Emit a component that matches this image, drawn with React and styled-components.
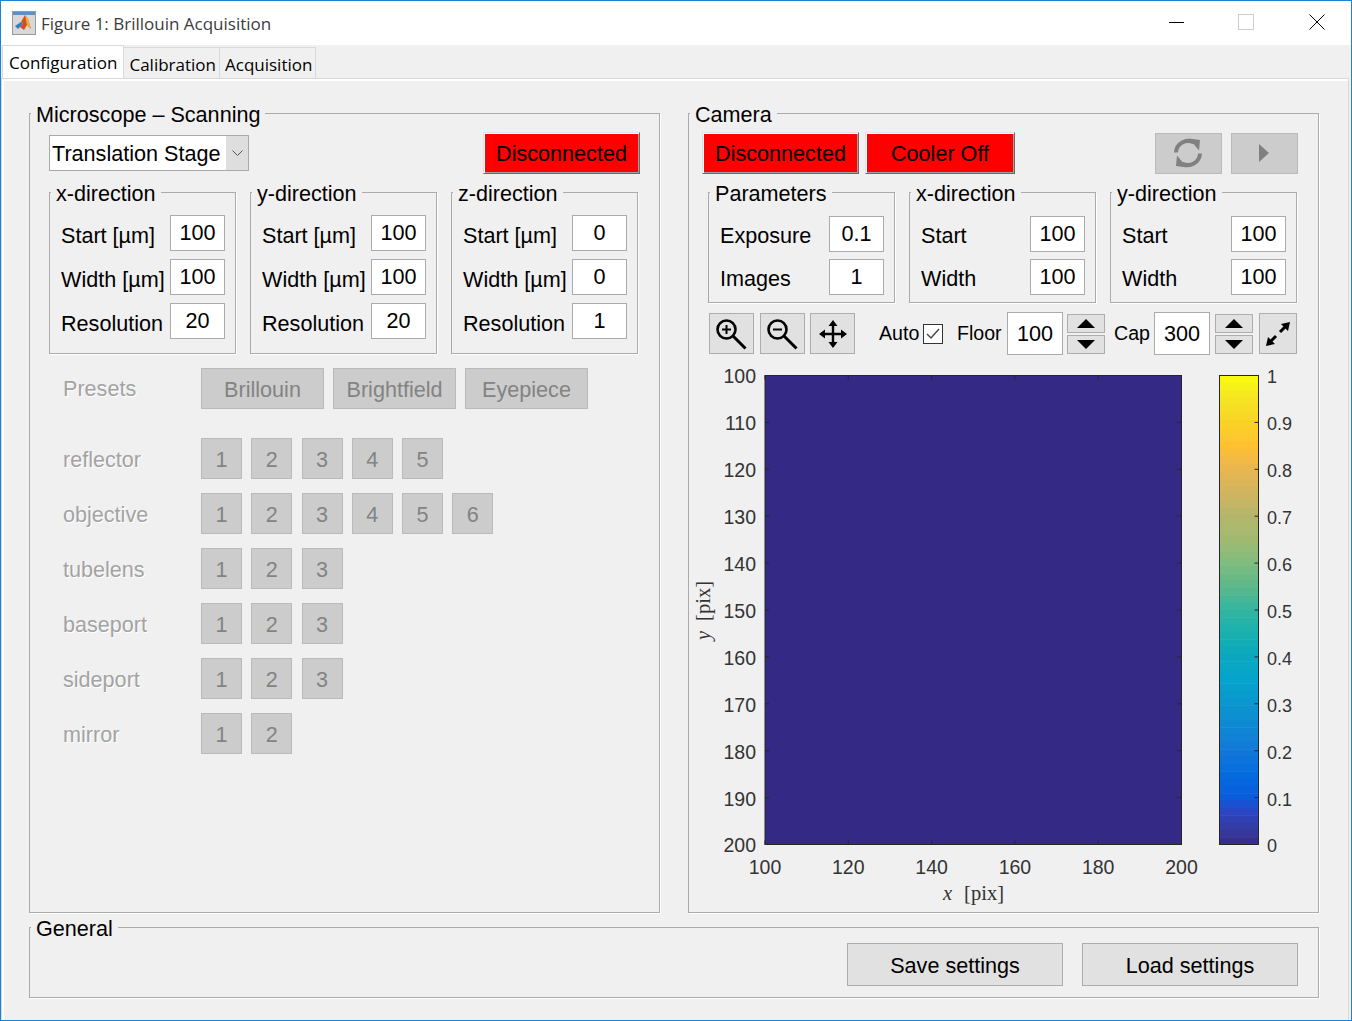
import styled, { createGlobalStyle } from 'styled-components'

const GlobalStyle = createGlobalStyle`
  html, body {
    margin: 0;
    padding: 0;
    background: #f0f0f0;
  }
  * {
    box-sizing: border-box;
  }
`

const SANS = `"Liberation Sans", Arial, sans-serif`
const UI = `"Open Sans", "Noto Sans", sans-serif`

const PARULA = [
  [0, '#352a87'], [0.03, '#363a9f'], [0.07, '#2b46c4'], [0.1, '#0a5cdc'], [0.15, '#046bdf'],
  [0.2, '#1178d8'], [0.25, '#0f88d2'], [0.3, '#0a96cf'], [0.35, '#06a4cc'], [0.4, '#0aa8c0'],
  [0.45, '#19b0ae'], [0.5, '#33b5a0'], [0.55, '#5cb98a'], [0.6, '#7fbc7d'], [0.65, '#a0ba6f'],
  [0.7, '#b4b66a'], [0.75, '#d0b55f'], [0.8, '#e9b650'], [0.85, '#ffc030'], [0.9, '#fad326'],
  [0.95, '#f5e524'], [1, '#f9fb0e'],
]

const hex = (c) => [1, 3, 5].map((i) => parseInt(c.slice(i, i + 2), 16))

const parula = (t) => {
  let i = 0
  while (i < PARULA.length - 2 && PARULA[i + 1][0] < t) i++
  const [t0, c0] = PARULA[i]
  const [t1, c1] = PARULA[i + 1]
  const f = Math.min(1, Math.max(0, (t - t0) / (t1 - t0)))
  const a = hex(c0)
  const b = hex(c1)
  return `rgb(${a.map((v, k) => Math.round(v + (b[k] - v) * f)).join(',')})`
}

const ScanGroup = ({ title, rows }) => (
  <SubPanel $padBottom={14} $pitch={8} $top={22}>
    <SubTitle>{title}</SubTitle>
    {rows.map(([label, value]) => (
      <FieldRow key={label}>
        <FieldLabel $shift={5}>{label}</FieldLabel>
        <ValueBox>{value}</ValueBox>
      </FieldRow>
    ))}
  </SubPanel>
)

const CameraGroup = ({ title, rows }) => (
  <SubPanel $padBottom={7} $pitch={7} $top={23}>
    <SubTitle>{title}</SubTitle>
    {rows.map(([label, value]) => (
      <FieldRow key={label}>
        <FieldLabel $shift={4}>{label}</FieldLabel>
        <ValueBox>{value}</ValueBox>
      </FieldRow>
    ))}
  </SubPanel>
)

const PresetLine = ({ label, count }) => (
  <PresetRow>
    <DisabledLabel $shift={3}>{label}</DisabledLabel>
    <ButtonRun $gap={9.28}>
      {Array.from({ length: count }, (_, i) => (
        <NumberButton key={i}>{i + 1}</NumberButton>
      ))}
    </ButtonRun>
  </PresetRow>
)

const MatlabLogo = () => (
  <svg width="24" height="24" viewBox="0 0 24 24">
    <rect x="0.5" y="0.5" width="23" height="23" fill="#d8d8d8" stroke="#9a9a9a" />
    <rect x="1" y="1" width="22" height="3" fill="#5f8fc4" />
    <path d="M3 15 L9 11 L11 12 L8 16 L6 18 Z" fill="#2f7fc0" />
    <path d="M9 11 L13 4 L16 8 L19 18 L15 14 L12 19 L8 16 L11 12 Z" fill="#d2501f" />
    <path d="M13 4 L16 8 L19 18 L15 14 Z" fill="#f2b035" />
  </svg>
)

const ZoomIcon = ({ plus }) => (
  <svg width="34" height="34" viewBox="0 0 34 34" fill="none" stroke="#000">
    <circle cx="11.5" cy="12.5" r="9" strokeWidth="2.6" />
    <path d="M18 19 L30.5 31.5" strokeWidth="3" />
    <path d="M7 12.5 H16" strokeWidth="2" />
    {plus && <path d="M11.5 8 V17" strokeWidth="2" />}
  </svg>
)

const PanIcon = () => (
  <svg width="30" height="30" viewBox="0 0 30 30" fill="#000" stroke="#000">
    <path d="M15 4 V26 M4 15 H26" strokeWidth="2.4" />
    <path d="M15 1 L19.5 7 H10.5 Z M15 29 L19.5 23 H10.5 Z M1 15 L7 10.5 V19.5 Z M29 15 L23 10.5 V19.5 Z" stroke="none" />
  </svg>
)

const ExpandIcon = () => (
  <svg width="26" height="26" viewBox="0 0 26 26" fill="#000" stroke="#000">
    <path d="M15 11 L20 6 M11 15 L6 20" strokeWidth="3" />
    <path d="M25 1 L23 10 L16 3 Z M1 25 L3 16 L10 23 Z" stroke="none" />
  </svg>
)

const RefreshIcon = () => (
  <svg width="30" height="30" viewBox="0 0 30 30" fill="#808080">
    <path d="M3 14.5 A12 12 0 0 1 21 4.6" fill="none" stroke="#808080" strokeWidth="4" />
    <path d="M27 15.5 A12 12 0 0 1 9 25.4" fill="none" stroke="#808080" strokeWidth="4" />
    <path d="M16 0.5 L27 2 L26 12.5 Z M14 29.5 L3 28 L4 17.5 Z" />
  </svg>
)

const Triangle = ({ dir, size = 18, h = 9, fill = '#000' }) => (
  <svg width={size} height={h} viewBox={`0 0 ${size} ${h}`} fill={fill}>
    <path d={dir === 'up' ? `M${size / 2} 0 L${size} ${h} H0 Z` : `M0 0 H${size} L${size / 2} ${h} Z`} />
  </svg>
)

const PlayIcon = () => (
  <svg width="10" height="18" viewBox="0 0 10 18" fill="#808080">
    <path d="M0 0 L10 9 L0 18 Z" />
  </svg>
)

const CheckMark = () => (
  <svg width="14" height="12" viewBox="0 0 14 12" fill="none" stroke="#444" strokeWidth="1.4">
    <path d="M1 6 L5 10 L13 1" />
  </svg>
)

const Spinner = ({ left }) => (
  <SpinnerStack $left={left}>
    <SpinnerButton><Triangle dir="up" /></SpinnerButton>
    <SpinnerButton><Triangle dir="down" /></SpinnerButton>
  </SpinnerStack>
)

const range = (n) => Array.from({ length: n }, (_, i) => i)

const Chart = () => {
  const left = 765
  const right = 1181.5
  const top = 375.5
  const bottom = 844.5
  const w = right - left
  const h = bottom - top
  return (
    <ChartSvg viewBox="689 360 629 546" width="629" height="546">
      <rect x={left} y={top} width={w} height={h} fill="#342a85" />
      {range(6).map((i) => {
        const x = left + (w * i) / 5
        return (
          <g key={i}>
            <path d={`M${x} ${bottom} v-4 M${x} ${top} v4`} stroke="#262626" />
            <TickText x={x} y={874} textAnchor="middle">{100 + i * 20}</TickText>
          </g>
        )
      })}
      {range(11).map((i) => {
        const y = top + (h * i) / 10
        return (
          <g key={i}>
            <path d={`M${left} ${y} h4 M${right} ${y} h-4`} stroke="#262626" />
            <TickText x={756} y={y + 7.9} textAnchor="end">{100 + i * 10}</TickText>
          </g>
        )
      })}
      <rect x={left} y={top} width={w} height={h} fill="none" stroke="#262626" />

      {range(64).map((i) => (
        <rect
          key={i}
          x={1219.5}
          y={top + (h * i) / 64}
          width={39}
          height={h / 64 + 0.5}
          fill={parula(1 - (i + 0.5) / 64)}
        />
      ))}
      <rect x={1219.5} y={top} width={39} height={h} fill="none" stroke="#262626" />
      {range(11).map((i) => {
        const y = top + (h * i) / 10
        return (
          <g key={i}>
            {i > 0 && i < 10 && <path d={`M1258.5 ${y} h-4`} stroke="#262626" />}
            <BarText x={1267} y={y + 7.9}>{i === 0 ? '1' : i === 10 ? '0' : (1 - i / 10).toFixed(1)}</BarText>
          </g>
        )
      })}

      <AxisText x={943} y={900}>
        <tspan fontStyle="italic">x</tspan>
        <tspan dx="12">[pix]</tspan>
      </AxisText>
      <AxisText transform="translate(710 640) rotate(-90)">
        <tspan fontStyle="italic">y</tspan>
        <tspan dx="10">[pix]</tspan>
      </AxisText>
    </ChartSvg>
  )
}

const App = () => (
  <>
    <GlobalStyle />
    <Window>
      <TitleBar>
        <LogoSlot><MatlabLogo /></LogoSlot>
        <WindowTitle>Figure 1: Brillouin Acquisition</WindowTitle>
        <WindowControls>
          <Minimize />
          <Maximize />
          <CloseGlyph width="16" height="16" viewBox="0 0 16 16" stroke="#000">
            <path d="M0.5 0.5 L15.5 15.5 M15.5 0.5 L0.5 15.5" />
          </CloseGlyph>
        </WindowControls>
      </TitleBar>
      <TabStrip>
        <Tab $active>Configuration</Tab>
        <Tab>Calibration</Tab>
        <Tab>Acquisition</Tab>
      </TabStrip>
      <TabPanel>
        <Columns>
          <Panel $height={800}>
            <PanelTitle>Microscope – Scanning</PanelTitle>
            <HeaderRow $left={19} $right={19}>
              <Select>
                <SelectValue>Translation Stage</SelectValue>
                <SelectArrow>
                  <svg width="11" height="7" viewBox="0 0 11 7" fill="none" stroke="#555">
                    <path d="M0.5 0.5 L5.5 5.5 L10.5 0.5" />
                  </svg>
                </SelectArrow>
              </Select>
              <StatusButton $width={157}>Disconnected</StatusButton>
            </HeaderRow>
            <GroupRow>
              <ScanGroup title="x-direction" rows={[['Start [µm]', 100], ['Width [µm]', 100], ['Resolution', 20]]} />
              <ScanGroup title="y-direction" rows={[['Start [µm]', 100], ['Width [µm]', 100], ['Resolution', 20]]} />
              <ScanGroup title="z-direction" rows={[['Start [µm]', 0], ['Width [µm]', 0], ['Resolution', 1]]} />
            </GroupRow>
            <Presets>
              <PresetHead>
                <DisabledLabel $shift={1}>Presets</DisabledLabel>
                <ButtonRun $gap={9}>
                  <PresetButton>Brillouin</PresetButton>
                  <PresetButton>Brightfield</PresetButton>
                  <PresetButton>Eyepiece</PresetButton>
                </ButtonRun>
              </PresetHead>
              <PresetLine label="reflector" count={5} />
              <PresetLine label="objective" count={6} />
              <PresetLine label="tubelens" count={3} />
              <PresetLine label="baseport" count={3} />
              <PresetLine label="sideport" count={3} />
              <PresetLine label="mirror" count={2} />
            </Presets>
          </Panel>

          <Panel $height={800}>
            <PanelTitle>Camera</PanelTitle>
            <HeaderRow $left={13} $right={20}>
              <ButtonPair $gap={6}>
                <StatusButton $width={157}>Disconnected</StatusButton>
                <StatusButton $width={150}>Cooler Off</StatusButton>
              </ButtonPair>
              <ButtonPair $gap={9}>
                <IconDisabled><RefreshIcon /></IconDisabled>
                <IconDisabled><PlayIcon /></IconDisabled>
              </ButtonPair>
            </HeaderRow>
            <GroupRow>
              <CameraGroup title="Parameters" rows={[['Exposure', 0.1], ['Images', 1]]} />
              <CameraGroup title="x-direction" rows={[['Start', 100], ['Width', 100]]} />
              <CameraGroup title="y-direction" rows={[['Start', 100], ['Width', 100]]} />
            </GroupRow>
            <Toolbar>
              <ToolButton><ZoomIcon plus /></ToolButton>
              <ToolButton $left={6}><ZoomIcon /></ToolButton>
              <ToolButton $left={5}><PanIcon /></ToolButton>
              <ToolLabel $left={24} $width={44}>Auto</ToolLabel>
              <CheckBox><CheckMark /></CheckBox>
              <ToolLabel $left={14} $width={50}>Floor</ToolLabel>
              <ToolInput>100</ToolInput>
              <Spinner left={4} />
              <ToolLabel $left={9} $width={40}>Cap</ToolLabel>
              <ToolInput>300</ToolInput>
              <Spinner left={5} />
              <WideTool><ExpandIcon /></WideTool>
            </Toolbar>
            <Chart />
          </Panel>
        </Columns>

        <Panel $height={71}>
          <PanelTitle>General</PanelTitle>
          <GeneralActions>
            <ActionButton>Save settings</ActionButton>
            <ActionButton>Load settings</ActionButton>
          </GeneralActions>
        </Panel>
      </TabPanel>
    </Window>
  </>
)

export default App

const Window = styled.div`
  width: 1352px;
  height: 1021px;
  border: 1px solid #1883d7;
  background: #f0f0f0;
  display: flex;
  flex-direction: column;
  overflow: hidden;
  font-family: ${SANS};
  color: #000;
`

const TitleBar = styled.div`
  height: 44px;
  background: #fff;
  display: flex;
  align-items: center;
  flex-shrink: 0;
`

const LogoSlot = styled.div`
  width: 40px;
  padding-left: 11px;
  display: flex;
`

const WindowTitle = styled.div`
  font-family: ${UI};
  font-size: 17px;
  color: #3c3c3c;
  flex: 1;
`

const WindowControls = styled.div`
  display: flex;
  align-items: center;
  gap: 54px;
  padding: 0 26px 2px 0;
`

const Minimize = styled.div`
  width: 15px;
  height: 1px;
  background: #000;
`

const Maximize = styled.div`
  width: 16px;
  height: 16px;
  border: 1px solid #ccc;
`

const CloseGlyph = styled.svg`
  margin-left: 1px;
`

const TabStrip = styled.div`
  height: 33px;
  padding-left: 1px;
  display: flex;
  align-items: flex-end;
  flex-shrink: 0;
`

const Tab = styled.div`
  font-family: ${UI};
  font-size: 17px;
  height: ${(p) => (p.$active ? 33 : 31)}px;
  padding: ${(p) => (p.$active ? '0 6px' : '2px 3px 0 5px')};
  background: ${(p) => (p.$active ? '#fff' : '#f0f0f0')};
  border: 1px solid #d9d9d9;
  border-bottom: none;
  border-left-width: ${(p) => (p.$active ? 1 : 0)}px;
  display: flex;
  align-items: center;
`

const TabPanel = styled.div`
  flex: 1;
  border: 1px solid #d9d9d9;
  border-bottom: none;
  box-shadow: inset 2px 2px 0 #fff;
  margin-right: 2px;
  padding: 34px 29px 0 27px;
  display: flex;
  flex-direction: column;
  gap: 14px;
`

const Columns = styled.div`
  display: grid;
  grid-template-columns: 631px 631px;
  column-gap: 28px;
`

const Panel = styled.section`
  position: relative;
  height: ${(p) => p.$height}px;
  border: 1px solid #ababab;
  box-shadow: 1px 1px 0 #fff;
`

const PanelTitle = styled.div`
  position: absolute;
  top: -12px;
  left: 1px;
  padding: 0 5px;
  font-size: 21.6px;
  line-height: 25px;
  background: #f0f0f0;
`

const HeaderRow = styled.div`
  height: 42px;
  margin-top: 18px;
  padding: 0 ${(p) => p.$right}px 0 ${(p) => p.$left}px;
  display: flex;
  align-items: center;
  justify-content: space-between;
`

const Select = styled.div`
  width: 200px;
  height: 36px;
  display: flex;
  background: #fff;
  border: 1px solid #a9a9a9;
`

const SelectValue = styled.div`
  flex: 1;
  padding-left: 2px;
  font-size: 21.6px;
  line-height: 36px;
  white-space: nowrap;
`

const SelectArrow = styled.div`
  width: 22px;
  background: #dedede;
  display: flex;
  align-items: center;
  justify-content: center;
`

const StatusButton = styled.div`
  width: ${(p) => p.$width}px;
  height: 42px;
  padding-top: 2px;
  background: #f00;
  font-size: 21.6px;
  display: flex;
  align-items: center;
  justify-content: center;
  border: 1px solid;
  border-color: #e3e3e3 #696969 #696969 #e3e3e3;
  box-shadow: inset 1px 1px 0 #fff, inset -1px -1px 0 #a0a0a0;
`

const ButtonPair = styled.div`
  display: flex;
  gap: ${(p) => p.$gap}px;
`

const IconDisabled = styled.div`
  width: 67px;
  height: 41px;
  padding-right: 2px;
  background: #ccc;
  border: 1px solid #bababa;
  display: flex;
  align-items: center;
  justify-content: center;
`

const GroupRow = styled.div`
  margin-top: 18px;
  padding: 0 19px;
  display: grid;
  grid-template-columns: repeat(3, 187px);
  column-gap: 14px;
`

const SubPanel = styled.div`
  position: relative;
  border: 1px solid #ababab;
  box-shadow: 1px 1px 0 #fff;
  padding: ${(p) => p.$top}px 10px ${(p) => p.$padBottom}px 11px;
  display: flex;
  flex-direction: column;
  gap: ${(p) => p.$pitch}px;
`

const SubTitle = styled.div`
  position: absolute;
  top: -11px;
  left: 1px;
  padding: 0 5px;
  font-size: 21.6px;
  line-height: 23px;
  background: #f0f0f0;
`

const FieldRow = styled.div`
  height: 36px;
  display: flex;
  align-items: center;
  justify-content: space-between;
`

const FieldLabel = styled.div`
  font-size: 21.6px;
  padding-top: ${(p) => p.$shift}px;
  white-space: nowrap;
`

const ValueBox = styled.div`
  width: 55px;
  height: 36px;
  flex-shrink: 0;
  background: #fff;
  border: 1px solid #ababab;
  font-size: 21.6px;
  display: flex;
  align-items: center;
  justify-content: center;
  padding-bottom: 1px;
`

const Presets = styled.div`
  margin-top: 14px;
  padding-left: 33px;
  display: flex;
  flex-direction: column;
  gap: 14px;
`

const PresetHead = styled.div`
  display: grid;
  grid-template-columns: 138px 1fr;
  align-items: center;
  margin-bottom: 15px;
`

const PresetRow = styled(PresetHead)`
  margin-bottom: 0;
`

const DisabledLabel = styled.div`
  font-size: 21.6px;
  padding-top: ${(p) => p.$shift}px;
  color: #a3a3a3;
  text-shadow: 1px 1px 0 #fff;
`

const ButtonRun = styled.div`
  display: flex;
  gap: ${(p) => p.$gap}px;
`

const disabledButton = `
  height: 41px;
  padding-top: 2px;
  background: #ccc;
  border: 1px solid #bababa;
  color: #838383;
  font-size: 21.6px;
  display: flex;
  align-items: center;
  justify-content: center;
`

const NumberButton = styled.div`
  ${disabledButton}
  width: 41px;
`

const PresetButton = styled.div`
  ${disabledButton}
  width: 123px;
`

const Toolbar = styled.div`
  height: 43px;
  margin-top: 9px;
  padding-left: 20px;
  display: flex;
  align-items: center;
`

const ToolButton = styled.div`
  width: 45px;
  height: 41px;
  margin-left: ${(p) => p.$left || 0}px;
  background: #e1e1e1;
  border: 1px solid #adadad;
  display: flex;
  align-items: center;
  justify-content: center;
`

const WideTool = styled(ToolButton)`
  width: 38px;
  margin-left: 6px;
`

const ToolLabel = styled.div`
  width: ${(p) => p.$width}px;
  margin-left: ${(p) => p.$left}px;
  font-size: 19.6px;
`

const CheckBox = styled.div`
  width: 20px;
  height: 20px;
  background: #fff;
  border: 1px solid #333;
  display: flex;
  align-items: center;
  justify-content: center;
`

const ToolInput = styled.div`
  width: 56px;
  height: 43px;
  background: #fff;
  border: 1px solid #ababab;
  font-size: 21.6px;
  display: flex;
  align-items: center;
  justify-content: center;
`

const SpinnerStack = styled.div`
  width: 38px;
  margin-left: ${(p) => p.$left}px;
  display: flex;
  flex-direction: column;
  gap: 2px;
`

const SpinnerButton = styled.div`
  height: 19px;
  background: #e1e1e1;
  border: 1px solid #adadad;
  display: flex;
  align-items: center;
  justify-content: center;
`

const ChartSvg = styled.svg`
  display: block;
  margin-top: 5px;
`

const TickText = styled.text`
  font-family: ${SANS};
  font-size: 19.5px;
  fill: #333;
`

const BarText = styled.text`
  font-family: ${SANS};
  font-size: 18px;
  fill: #333;
`

const AxisText = styled.text`
  font-family: "Liberation Serif", serif;
  font-size: 20.5px;
  fill: #333;
`

const GeneralActions = styled.div`
  padding: 15px 20px 0 0;
  display: flex;
  justify-content: flex-end;
  gap: 19px;
`

const ActionButton = styled.div`
  width: 216px;
  height: 43px;
  padding-top: 2px;
  background: #e1e1e1;
  border: 1px solid #adadad;
  font-size: 21.6px;
  display: flex;
  align-items: center;
  justify-content: center;
`
